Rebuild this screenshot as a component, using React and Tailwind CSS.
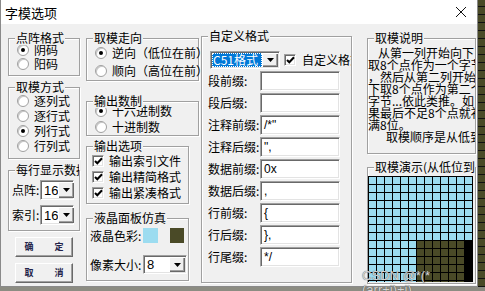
import React from "react";

const CJK = "font-['Noto_Sans_CJK_SC','Noto_Sans',sans-serif]";
const SUNKEN =
  "border border-t-[#a0a0a0] border-l-[#a0a0a0] border-r-white border-b-white shadow-[inset_1px_1px_0_#696969,inset_-1px_-1px_0_#e3e3e3]";

function Group({ title, className = "", children }) {
  return (
    <div
      className={`relative shrink-0 border border-[#a0a0a0] shadow-[inset_1px_1px_0_#fff,1px_1px_0_#fff] ${className}`}
    >
      <span className="absolute left-[6px] top-[-8px] max-w-[calc(100%_-_6px)] overflow-hidden whitespace-nowrap bg-[#f0f0f0] px-px text-[12px] leading-[14px]">
        {title}
      </span>
      {children}
    </div>
  );
}

function Radio({ checked, label, className = "h-[14px]" }) {
  return (
    <div className={`flex items-center whitespace-nowrap ${className}`}>
      <span className="ml-[8px] flex h-[12px] w-[12px] shrink-0 items-center justify-center rounded-full border border-[#a0a0a0] bg-white shadow-[inset_1px_1px_0_#c8c8c8]">
        {checked && <span className="h-[4px] w-[4px] rounded-full bg-black" />}
      </span>
      <span className="ml-[5px] text-[12px] leading-[14px]">{label}</span>
    </div>
  );
}

function Check({ className = "" }) {
  return (
    <span className={`flex h-[12px] w-[12px] shrink-0 items-center justify-center bg-white ${SUNKEN} ${className}`}>
      <svg width="9" height="8" viewBox="0 0 9 8">
        <polyline points="1,4 3.3,6.3 8,1.2" fill="none" stroke="#000" strokeWidth="2" />
      </svg>
    </span>
  );
}

function DropBtn() {
  return (
    <span className="flex w-[16px] shrink-0 items-center justify-center bg-[#f0f0f0] shadow-[inset_1px_1px_0_#fff,inset_-1px_-1px_0_#696969,inset_-2px_-2px_0_#a0a0a0]">
      <svg width="7" height="4" viewBox="0 0 7 4">
        <polygon points="0,0 7,0 3.5,4" fill="#000" />
      </svg>
    </span>
  );
}

function Combo({ value, className = "" }) {
  return (
    <div className={`flex bg-white p-px ${SUNKEN} ${className}`}>
      <span className="flex flex-1 items-center pl-[2px] font-['Liberation_Sans',sans-serif] text-[13px] leading-none">
        {value}
      </span>
      <DropBtn />
    </div>
  );
}

function Field({ label, value }) {
  return (
    <div className="mt-[2px] flex h-[20px] items-center">
      <span className="w-[58px] shrink-0 pl-[6px] text-[12px] leading-[14px]">{label}</span>
      <div className={`flex h-[20px] w-[80px] items-center bg-white pl-[3px] font-['Liberation_Sans',sans-serif] text-[12px] ${SUNKEN}`}>
        {value}
      </div>
    </div>
  );
}

function Button({ a, b, className = "" }) {
  return (
    <div
      className={`ml-[7px] flex h-[20px] w-[58px] items-center justify-center gap-[21px] border border-t-white border-l-white border-r-[#696969] border-b-[#696969] bg-[#f0f0f0] shadow-[inset_-1px_-1px_0_#a0a0a0] text-[9px] font-bold text-[#24244a] ${className}`}
    >
      <span>{a}</span>
      <span>{b}</span>
    </div>
  );
}

const fields = [
  ["段前缀:", ""],
  ["段后缀:", ""],
  ["注释前缀:", '/*"'],
  ["注释后缀:", '",'],
  ["数据前缀:", "0x"],
  ["数据后缀:", ","],
  ["行前缀:", "{"],
  ["行后缀:", "},"],
  ["行尾缀:", "*/"],
];

const notes = [
  ["pl-[10px]", "从第一列开始向下"],
  ["", "取8个点作为一个字节"],
  ["", "，然后从第二列开始向"],
  ["", "下取8个点作为第二个"],
  ["", "字节...依此类推。如"],
  ["", "果最后不足8个点就补"],
  ["", "满8位。"],
  ["pl-[18px]", "取模顺序是从低到高"],
];

function Demo() {
  const cells = [];
  for (let r = 0; r < 14; r++) {
    for (let c = 0; c < 13; c++) {
      let color = "bg-[#9cdcf0]";
      if (r >= 8 && c >= 6) color = c === 12 ? "bg-black" : "bg-[#4a4a27]";
      cells.push(<div key={r * 13 + c} className={`h-[7px] w-[7px] ${color}`} />);
    }
  }
  return (
    <div className="mt-[8px] h-[106px] overflow-hidden">
      <div className="grid w-[105px] grid-cols-[repeat(13,7px)] gap-px bg-black p-px">{cells}</div>
    </div>
  );
}

export default function App() {
  return (
    <div className={`flex h-[291px] w-[485px] flex-col overflow-hidden bg-[#8c8c82] text-black ${CJK}`}>
      <div className="flex h-[287px]">
        {/* dialog */}
        <div className="relative flex h-[287px] w-[478px] flex-col border-x border-b border-[#8a8a8a] bg-[#f0f0f0]">
          <div className="flex h-[24px] shrink-0 items-center justify-between bg-white pl-[4px] pr-[10px]">
            <span className="text-[13px] leading-none">字模选项</span>
            <svg width="12" height="12" viewBox="0 0 12 12">
              <path d="M1 1 L11 11 M11 1 L1 11" stroke="#111" strokeWidth="1" />
            </svg>
          </div>

          <div className="flex items-start pl-[7px]">
            {/* column 1 */}
            <div className="flex w-[72px] shrink-0 flex-col">
              <Group title="点阵格式" className="mt-[14px] h-[38px] pt-[4px]">
                <Radio checked label="阴码" />
                <Radio label="阳码" />
              </Group>
              <Group title="取模方式" className="mt-[11px] h-[72px] pt-[5px]">
                <Radio className="h-[15px]" label="逐列式" />
                <Radio className="h-[15px]" label="逐行式" />
                <Radio className="h-[15px]" checked label="列行式" />
                <Radio className="h-[15px]" label="行列式" />
              </Group>
              <Group title="每行显示数据" className="mt-[11px] h-[61px] pt-[9px]">
                <div className="flex items-center">
                  <span className="w-[31px] pl-[3px] text-[12px] leading-[14px]">点阵:</span>
                  <Combo value="16" className="h-[20px] w-[34px]" />
                </div>
                <div className="mt-[5px] flex items-center">
                  <span className="w-[31px] pl-[3px] text-[12px] leading-[14px]">索引:</span>
                  <Combo value="16" className="h-[20px] w-[34px]" />
                </div>
              </Group>
              <Button a="确" b="定" className="mt-[6px]" />
              <Button a="取" b="消" className="mt-[6px]" />
            </div>

            {/* column 2 */}
            <div className="ml-[6px] flex w-[113px] shrink-0 flex-col">
              <Group title="取模走向" className="mt-[14px] h-[43px] pt-[6px]">
                <Radio className="h-[16px]" checked label="逆向（低位在前）" />
                <Radio className="mt-[2px] h-[16px]" label="顺向（高位在前）" />
              </Group>
              <Group title="输出数制" className="mt-[20px] h-[35px] pt-[2px]">
                <Radio checked label="十六进制数" />
                <Radio className="mt-[2px] h-[14px]" label="十进制数" />
              </Group>
              <Group title="输出选项" className="mt-[10px] h-[58px] w-[103px] pt-[7px]">
                {["输出索引文件", "输出精简格式", "输出紧凑格式"].map((t, i) => (
                  <div key={t} className={`flex h-[14px] items-center overflow-hidden whitespace-nowrap ${i ? "mt-[2px]" : ""}`}>
                    <Check className="ml-[5px]" />
                    <span className="ml-[5px] text-[12px] leading-[14px]">{t}</span>
                  </div>
                ))}
              </Group>
              <Group title="液晶面板仿真" className="mt-[14px] h-[63px] w-[103px] pt-[9px]">
                <div className="flex h-[15px] items-center">
                  <span className="w-[56px] shrink-0 pl-[3px] text-[12px] leading-[14px]">液晶色彩:</span>
                  <span className="h-[15px] w-[15px] bg-[#9cdcf0]" />
                  <span className="ml-[12px] h-[15px] w-[14px] bg-[#4a4a27]" />
                </div>
                <div className="mt-[12px] flex items-center">
                  <span className="w-[56px] shrink-0 pl-[3px] text-[12px] leading-[14px]">像素大小:</span>
                  <Combo value="8" className="h-[19px] w-[44px]" />
                </div>
              </Group>
            </div>

            {/* column 3 */}
            <Group title="自定义格式" className="ml-[2px] mt-[12px] h-[247px] w-[151px]">
              <div className="mt-[14px] flex items-center overflow-hidden whitespace-nowrap">
                <div className={`ml-[8px] flex h-[18px] w-[70px] shrink-0 bg-white p-px ${SUNKEN}`}>
                  <span className="flex flex-1 items-center bg-[#0078d7] pl-[1px] text-[12px] leading-none text-white outline-1 outline-dotted outline-offset-[-1px] outline-[#fff]">
                    C51格式
                  </span>
                  <DropBtn />
                </div>
                <Check className="ml-[4px]" />
                <span className="ml-[6px] text-[12px] leading-[14px]">自定义格式</span>
              </div>
              <div className="mt-[1px]">
                {fields.map(([l, v]) => (
                  <Field key={l} label={l} value={v} />
                ))}
              </div>
            </Group>

            {/* column 4 */}
            <div className="ml-[15px] flex w-[109px] shrink-0 flex-col">
              <Group title="取模说明" className="mt-[14px] h-[116px]">
                <div className="mt-[8px] overflow-hidden">
                  {notes.map(([p, t], i) => (
                    <div key={i} className={`h-[12px] whitespace-nowrap text-[12px] leading-[12px] ${p}`}>
                      {t}
                    </div>
                  ))}
                </div>
              </Group>
              <Group title="取模演示(从低位到高位)" className="mt-[13px] h-[117px]">
                <Demo />
              </Group>
            </div>
          </div>

          {/* watermark over the demo grid */}
          <span className="absolute left-[361px] top-[269px] font-['Liberation_Sans',sans-serif] text-[13px] leading-[14px] text-[#d4d4d4] [text-shadow:0_0_1px_#3a3a3a]">
            CSDN @*(*(arr+i)+j)
          </span>
        </div>

        {/* background strip */}
        <div className="h-full w-[7px] bg-[repeating-linear-gradient(0deg,#111_0_1px,#4a4a27_1px_8px)]" />
      </div>
    </div>
  );
}
